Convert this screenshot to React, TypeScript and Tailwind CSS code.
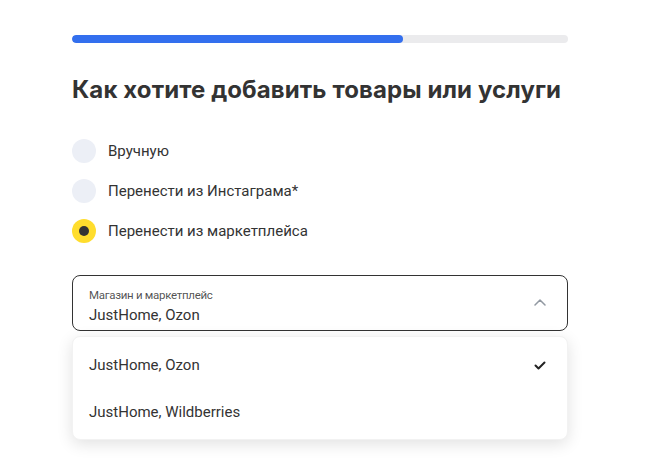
import { useState } from "react";

const options = ["Вручную", "Перенести из Инстаграма*", "Перенести из маркетплейса"];
const shops = ["JustHome, Ozon", "JustHome, Wildberries"];

function Radio({ checked }: { checked: boolean }) {
  return checked ? (
    <span className="w-6 h-6 rounded-full bg-[#ffdd2d] flex items-center justify-center shrink-0">
      <span className="w-[10px] h-[10px] rounded-full bg-[#333333]" />
    </span>
  ) : (
    <span className="w-6 h-6 rounded-full bg-[#eceff6] shrink-0" />
  );
}

export default function App() {
  const [selected, setSelected] = useState(2);
  const [shop, setShop] = useState(0);

  return (
    <div className="min-h-screen bg-white text-[#333333] font-['Roboto',sans-serif]">
      <div className="w-[496px] ml-[72px] pt-[35px]">
        {/* progress */}
        <div className="h-[8px] rounded-full bg-[#ebebed] overflow-hidden">
          <div className="h-full w-[331px] rounded-full bg-[#336fee]" />
        </div>

        <h1 className="mt-[32px] font-['Inter',sans-serif] text-[24px] leading-[30px] font-bold tracking-[0.1px] text-[#333333]">
          Как хотите добавить товары или услуги
        </h1>

        <div className="mt-[34px] flex flex-col gap-4">
          {options.map((o, i) => (
            <button
              key={o}
              onClick={() => setSelected(i)}
              className="flex items-center gap-3 text-left"
            >
              <Radio checked={selected === i} />
              <span className="text-[15px] leading-6 text-[#333333]">{o}</span>
            </button>
          ))}
        </div>

        <div className="mt-[32px] h-[56px] border border-[#333333] rounded-lg pl-4 pr-[21px] pt-[11px] flex items-start justify-between">
          <div className="flex flex-col">
            <span className="text-[11.5px] leading-4 tracking-[-0.3px] text-[#333333]/85">Магазин и маркетплейс</span>
            <span className="text-[15px] leading-6 text-[#333333]">{shops[shop]}</span>
          </div>
          <svg width="12" height="7" viewBox="0 0 12 7" className="mt-[12px]">
            <path d="M1 6l5-5 5 5" fill="none" stroke="#9299a2" strokeWidth="1.5" strokeLinecap="round" strokeLinejoin="round" />
          </svg>
        </div>

        <div className="mt-[5px] rounded-lg bg-white border border-[#f2f2f2] shadow-[0_4px_16px_rgba(0,0,0,0.12)] pt-[5px] pb-[3px]">
          {shops.map((s, i) => (
            <button
              key={s}
              onClick={() => setShop(i)}
              className="w-full h-[47px] pl-4 pr-[21px] flex items-center justify-between text-left"
            >
              <span className="text-[15px] text-[#333333]">{s}</span>
              {shop === i && (
                <svg width="12" height="9" viewBox="0 0 12 9">
                  <path d="M1.5 4.5l3 3 6-6" fill="none" stroke="#222222" strokeWidth="2" strokeLinecap="round" strokeLinejoin="round" />
                </svg>
              )}
            </button>
          ))}
        </div>
      </div>
    </div>
  );
}
